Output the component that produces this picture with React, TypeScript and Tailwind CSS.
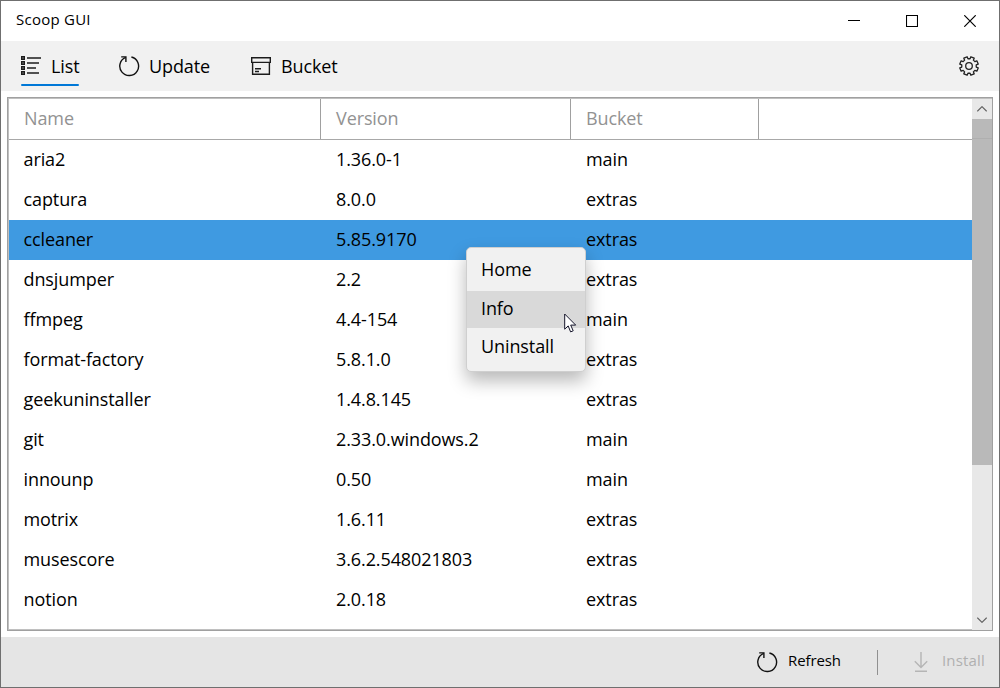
import React from "react";

const packages: [string, string, string][] = [
  ["aria2", "1.36.0-1", "main"],
  ["captura", "8.0.0", "extras"],
  ["ccleaner", "5.85.9170", "extras"],
  ["dnsjumper", "2.2", "extras"],
  ["ffmpeg", "4.4-154", "main"],
  ["format-factory", "5.8.1.0", "extras"],
  ["geekuninstaller", "1.4.8.145", "extras"],
  ["git", "2.33.0.windows.2", "main"],
  ["innounp", "0.50", "main"],
  ["motrix", "1.6.11", "extras"],
  ["musescore", "3.6.2.548021803", "extras"],
  ["notion", "2.0.18", "extras"],
];

function ListIcon() {
  return (
    <svg width="20" height="20" viewBox="0 0 20 20" fill="none" stroke="#1c1c1c" className="shrink-0">
      <path d="M6 2h14M6 7h12M6 12h9M6 17h12" strokeWidth="1.4" />
      <path d="M.8 .8h2.4v2.4H.8zM.8 5.8h2.4v2.4H.8zM.8 10.8h2.4v2.4H.8zM.8 15.8h2.4v2.4H.8z" strokeWidth="1.6" />
    </svg>
  );
}

function RefreshIcon() {
  return (
    <svg width="21" height="21" viewBox="0 0 21 21" fill="none" stroke="#111" strokeWidth="1.4" className="shrink-0">
      <path d="M6.7 1.4A9.4 9.4 0 1 0 12.4 1" />
      <path d="M2.2 .9h4.7v5" />
    </svg>
  );
}

function BucketIcon() {
  return (
    <svg width="20" height="18" viewBox="0 0 20 18" fill="none" stroke="#1c1c1c" strokeWidth="1.4" className="shrink-0">
      <path d="M.7 .7h18.6v4.7H.7zM1.6 5.4v11.9h16.8v-11.9M4 11.8h6M4 14.5h4" />
    </svg>
  );
}

function gearPath() {
  const points: string[] = [];
  for (let i = 0; i < 8; i++) {
    const base = (i * Math.PI) / 4 - Math.PI / 2;
    for (const [offset, radius] of [[-0.25, 7.3], [-0.19, 9.4], [0.19, 9.4], [0.25, 7.3]]) {
      const a = base + Math.PI / 8 + offset;
      points.push(`${(10 + radius * Math.cos(a)).toFixed(2)} ${(10 + radius * Math.sin(a)).toFixed(2)}`);
    }
  }
  return `M${points.join("L")}Z`;
}

function GearIcon() {
  return (
    <svg width="20" height="20" viewBox="0 0 20 20" fill="none" stroke="#222" strokeWidth="1.3" strokeLinejoin="round">
      <path d={gearPath()} />
      <circle cx="10" cy="10" r="3.3" />
    </svg>
  );
}

function Chevron({ down }: { down?: boolean }) {
  return (
    <svg width="10" height="6" viewBox="0 0 10 6" fill="none" stroke="#606060" strokeWidth="1.2">
      <path d={down ? "M.3 .6L5 5.3L9.7 .6" : "M.3 5.4L5 .7L9.7 5.4"} />
    </svg>
  );
}

export default function App() {
  return (
    <div className="flex h-[688px] w-[1000px] flex-col overflow-hidden border border-[#6f6f6f] bg-white font-['Open_Sans','Noto_Sans',sans-serif] text-[18px] tracking-[-0.1px] text-black">
      <header className="flex h-10 shrink-0 items-center justify-between pl-[15px] pr-[23px]">
        <h1 className="-mt-1 text-[15px] leading-5 tracking-[0.25px]">Scoop GUI</h1>
        <div className="flex items-center gap-[46px]">
          <svg width="12" height="12" className="block"><path d="M0 5.5h12" stroke="#000" /></svg>
          <svg width="12" height="12" className="block"><path d="M.5 .5h11v11H.5z" fill="none" stroke="#000" strokeWidth="1.1" /></svg>
          <svg width="12" height="12" className="block"><path d="M.3 .3l11.4 11.4M11.7 .3L.3 11.7" stroke="#000" strokeWidth="1.2" /></svg>
        </div>
      </header>

      <nav className="flex h-[50px] shrink-0 items-start bg-[#f1f1f1] pl-5 pr-5">
        <div className="flex h-[45px] w-[58px] flex-col">
          <div className="flex h-[43px] items-center gap-[10px] pt-[6px]">
            <ListIcon />
            <span className="pt-px">List</span>
          </div>
          <div className="h-[2px] rounded-full bg-[#0078d7]" />
        </div>
        <div className="ml-10 flex h-[50px] w-[93px] items-center gap-[9px]">
          <RefreshIcon />
          <span>Update</span>
        </div>
        <div className="ml-[39px] flex h-[50px] items-center gap-[10px]">
          <BucketIcon />
          <span>Bucket</span>
        </div>
        <div className="ml-auto flex h-[50px] items-center">
          <GearIcon />
        </div>
      </nav>

      <main className="mx-[6px] mt-[6px] flex h-[534px] shrink-0 border border-[#a0a0a0]">
        <div className="flex-1 overflow-hidden border-b border-l border-t border-[#c0c0c0]">
          <div className="grid h-[41px] grid-cols-[312px_250px_188px_1fr] border-b border-[#a8a8a8] leading-[38px] text-[#929292]">
            <div className="border-r border-[#a0a0a0] pl-[15px]">Name</div>
            <div className="border-r border-[#a0a0a0] pl-[15px]">Version</div>
            <div className="border-r border-[#a0a0a0] pl-[15px]">Bucket</div>
          </div>
          {packages.map(([name, version, bucket], i) => (
            <div
              key={name}
              className={`grid h-10 grid-cols-[312px_250px_188px_1fr] leading-[39px] ${i === 2 ? "bg-[#3f9ae1]" : ""}`}
            >
              <div className="pl-[14.5px]">{name}</div>
              <div className="pl-[15px]">{version}</div>
              <div className="pl-[15px]">{bucket}</div>
            </div>
          ))}
        </div>
        <div className="flex w-5 flex-col border-t border-[#c0c0c0] bg-[#e8e8e8]">
          <div className="flex h-5 items-center justify-center"><Chevron /></div>
          <div className="h-[346px] bg-[#b9b9b9] pt-[19px]">
            <div className="h-px bg-[#afafaf]" />
          </div>
          <div className="mt-auto flex h-5 items-center justify-center"><Chevron down /></div>
        </div>
      </main>

      <footer className="mt-[6px] flex flex-1 items-center bg-[#e5e5e5] pl-[756px] text-[15px]">
        <RefreshIcon />
        <span className="-mt-1 ml-[10px] w-[54px]">Refresh</span>
        <div className="ml-[35px] h-[25px] w-px bg-[#909090]" />
        <svg width="14" height="20" viewBox="0 0 14 20" fill="none" stroke="#b5b5b5" strokeWidth="1.4" className="ml-[36px]">
          <path d="M7 0v15M.8 9.2L7 15.4l6.2-6.2M1 19.2h12" />
        </svg>
        <span className="-mt-1 ml-[14px] tracking-[0.15px] text-[#b0b0b0]">Install</span>
      </footer>

      <div className="absolute left-[466px] top-[247px] h-[125px] w-[120px] overflow-visible rounded-[5px] border border-[#cfcfcf] bg-[#f1f1f1] pt-[5px] shadow-[0_9px_18px_rgba(0,0,0,0.28)]">
        <div className="h-[38px] pl-[14px] leading-[32px]">Home</div>
        <div className="h-[37px] bg-[#d9d9d9] pl-[14px] leading-[34px]">Info</div>
        <div className="h-[38px] pl-[14px] leading-[36px]">Uninstall</div>
      </div>
      <svg width="14" height="21" viewBox="0 0 14 21" className="absolute left-[564px] top-[313px]">
        <path d="M.7 1v15.2l3.5-3.3 2.4 6 2.6-1.1-2.5-5.7h5z" fill="#fff" stroke="#15152b" strokeWidth="1" />
      </svg>
    </div>
  );
}
